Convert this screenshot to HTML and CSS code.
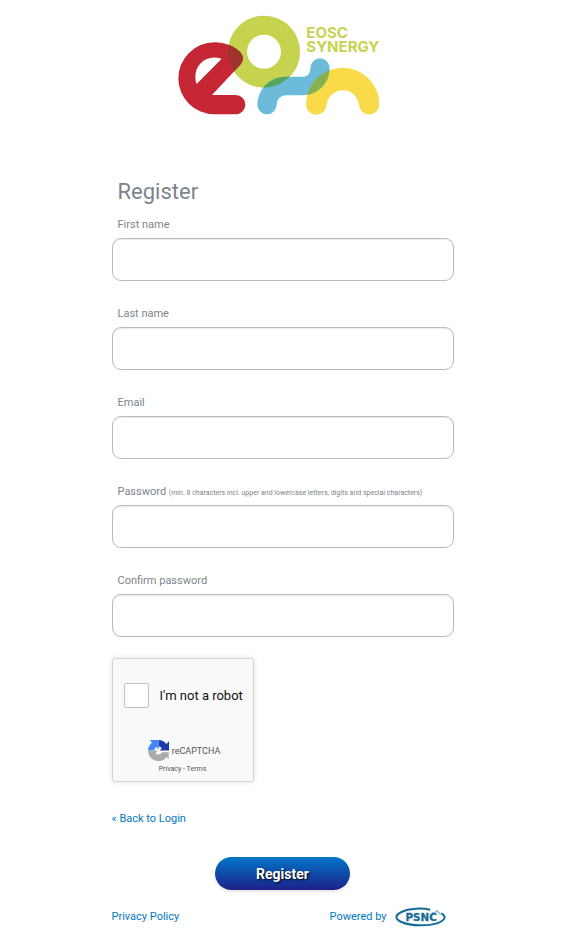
FILE: index.html
```
<!DOCTYPE html>
<html lang="en">
<head>
  <meta charset="UTF-8" />
  <meta name="viewport" content="width=device-width, initial-scale=1.0"/>
  <title>Register</title>
  <link rel="stylesheet" href="styles.css">
</head>
<body>

<div class="page">
  <!-- Logo -->
  <header class="brand">
    <svg class="logo" viewBox="24 28 606 300" role="img" aria-label="EOSC Synergy">
      <defs>
        <clipPath id="ring">
          <path clip-rule="evenodd" d="M282 30a108 108 0 1 1 0 216a108 108 0 1 1 0-216zM282 87a51 51 0 1 0 0 102a51 51 0 1 0 0-102z"/>
        </clipPath>
        <clipPath id="arch">
          <path d="M408 296A110 110 0 0 1 628 296A30 30 0 0 1 567 296A49 49 0 0 0 470 296A31 31 0 0 1 408 296z"/>
        </clipPath>
        <path id="wave" d="M262 297A85 85 0 0 1 347 213H400A22 22 0 0 0 421 191V187A29 29 0 0 1 479 187A82 82 0 0 1 397 269H347A27 27 0 0 0 320 297A29 29 0 0 1 262 297z"/>
        <path id="letter-e" fill-rule="evenodd" d="M197 326H133A108 108 0 0 1 133 110C165 110 192 121 211 140Q227 158 211 177L126 268H197A28 28 0 0 1 197 326zM80 235L155 159C111 145 76 174 76 214Q76 226 80 235z"/>
      </defs>
      <circle cx="282" cy="138" r="79.5" fill="none" stroke="#c5d34e" stroke-width="57"/>
      <use href="#letter-e" fill="#c52634"/>
      <use href="#letter-e" fill="#9f342c" clip-path="url(#ring)"/>
      <path fill="#f9db49" d="M408 296A110 110 0 0 1 628 296A30 30 0 0 1 567 296A49 49 0 0 0 470 296A31 31 0 0 1 408 296z"/>
      <use href="#wave" fill="#6cbbda"/>
      <use href="#wave" fill="#54a65b" clip-path="url(#ring)"/>
      <use href="#wave" fill="#87b14d" clip-path="url(#arch)"/>
      <text class="logo-text" x="409" y="97">EOSC</text>
      <text class="logo-text" x="409" y="140">SYNERGY</text>
    </svg>
  </header>

  <main>
    <h1>Register</h1>
    <form class="register-form" action="#">
      <div class="field">
        <label for="first-name">First name</label>
        <input type="text" id="first-name">
      </div>
      <div class="field">
        <label for="last-name">Last name</label>
        <input type="text" id="last-name">
      </div>
      <div class="field">
        <label for="email">Email</label>
        <input type="email" id="email">
      </div>
      <div class="field">
        <label for="password">Password <span class="hint">(min. 8 characters incl. upper and lowercase letters, digits and special characters)</span></label>
        <input type="password" id="password">
      </div>
      <div class="field">
        <label for="password-confirm">Confirm password</label>
        <input type="password" id="password-confirm">
      </div>

      <!-- Captcha -->
      <div class="captcha">
        <div class="captcha-check">
          <input type="checkbox" id="robot">
          <label for="robot">I'm not a robot</label>
        </div>
        <div class="captcha-brand">
          <svg class="captcha-icon" viewBox="0 0 64 64" aria-hidden="true">
            <path fill="#1c3aa9" d="M64 32V4l-8 8A32 32 0 0 0 32 0v20a13 13 0 0 1 10 6l-7 6z"/>
            <path fill="#4285f4" d="M32 0H5l7 8A32 32 0 0 0 0 32h19a14 14 0 0 1 6-11l7 8z"/>
            <path fill="#ababab" d="M0 32A32 32 0 0 0 57 52l6 6V37H44A16 16 0 0 1 22 42l8-10z"/>
          </svg>
          <span>reCAPTCHA</span>
        </div>
        <div class="captcha-links"><a href="#">Privacy</a> - <a href="#">Terms</a></div>
      </div>

      <a class="back" href="#">« Back to Login</a>
      <button type="submit" class="submit">Register</button>
    </form>
  </main>

  <footer>
    <a href="#">Privacy Policy</a>
    <a class="powered" href="#">
      Powered by
      <svg class="psnc" viewBox="0 0 150 60" role="img" aria-label="PSNC">
        <path fill="none" stroke="#176b97" stroke-width="6" d="M104 8C80 3 42 3 18 15C-3 25-2 36 18 45C45 58 105 58 132 46C151 37 152 27 137 19"/>
        <path fill="none" stroke="#7fb2cb" stroke-width="4" d="M111 15q6 9 9 0t9 1t10 1"/>
        <text class="psnc-text" x="30" y="42">PSNC</text>
      </svg>
    </a>
  </footer>
</div>

</body>
</html>
```
FILE: styles.css
```
* {
  margin: 0;
  padding: 0;
  box-sizing: border-box;
}

body {
  font-family: Roboto, Arial, sans-serif;
  font-size: 11px;
  line-height: 16px;
  color: #7c858c;
  background-color: #fff;
}

a {
  color: #0079c1;
  text-decoration: none;
}

a:hover {
  text-decoration: underline;
}

.page {
  max-width: 342px;
  margin: 0 auto;
  padding-top: 15px;
}

.brand {
  display: flex;
  justify-content: center;
  padding-right: 8px;
  margin-bottom: 62px;
}

.logo {
  width: 202px;
  height: 100px;
}

.logo-text {
  font-family: Inter, sans-serif;
  font-size: 45px;
  font-weight: 700;
  fill: #c5d34e;
}

h1 {
  padding-left: 6px;
  font-size: 22px;
  font-weight: 400;
  line-height: 30px;
  margin-bottom: 10px;
}

.register-form {
  display: flex;
  flex-direction: column;
}

.field {
  display: flex;
  flex-direction: column;
  gap: 5px;
  margin-bottom: 25px;
}

.field label {
  padding-left: 6px;
}

.field input {
  width: 100%;
  height: 43px;
  padding: 0 12px;
  border: 1px solid #bbb;
  border-radius: 9px;
  box-shadow: inset 0 1px 1px rgba(3,3,3,0.08);
  font: inherit;
}

.hint {
  font-size: 7px;
  line-height: 1;
}

.captcha {
  width: 142px;
  height: 124px;
  margin-top: -4px;
  margin-bottom: 29px;
  padding-top: 24px;
  border: 1px solid #d3d3d3;
  border-radius: 3px;
  background-color: #f9f9f9;
  box-shadow: 0 0 4px 1px rgba(0,0,0,0.08);
  color: #555;
  text-align: center;
}

.captcha-check {
  display: flex;
  align-items: center;
  gap: 11px;
  padding-left: 11px;
  margin-bottom: 32px;
  font-size: 13px;
  color: #111;
}

.captcha-check input {
  appearance: none;
  width: 25px;
  height: 25px;
  border: 1px solid #c1c1c1;
  border-radius: 2px;
  background-color: #fff;
}

.captcha-brand {
  display: flex;
  align-items: center;
  justify-content: center;
  gap: 3px;
  padding-left: 3px;
  font-size: 9px;
}

.captcha-icon {
  width: 21px;
  height: 21px;
}

.captcha-links {
  font-size: 7px;
}

.captcha-links a {
  color: #555;
}

.back {
  align-self: flex-start;
  margin-bottom: 30px;
}

.submit {
  align-self: center;
  width: 135px;
  height: 33px;
  border: none;
  border-radius: 17px;
  background: linear-gradient(#0076c8, #1d2088);
  box-shadow: 0 2px 3px rgba(3,3,3,0.1);
  color: #fff;
  font: bold 14px Roboto, Arial, sans-serif;
  text-shadow: 1px 1px 2px #000;
  cursor: pointer;
}

footer {
  display: flex;
  justify-content: space-between;
  align-items: center;
  padding: 17px 8px 0 0;
}

.powered {
  display: flex;
  align-items: center;
  gap: 8px;
}

.psnc {
  width: 51px;
  height: 20px;
}

.psnc-text {
  font-family: "DejaVu Sans", sans-serif;
  font-size: 31px;
  font-weight: 700;
  fill: #176b97;
  stroke: #176b97;
  stroke-width: 1px;
}
```
